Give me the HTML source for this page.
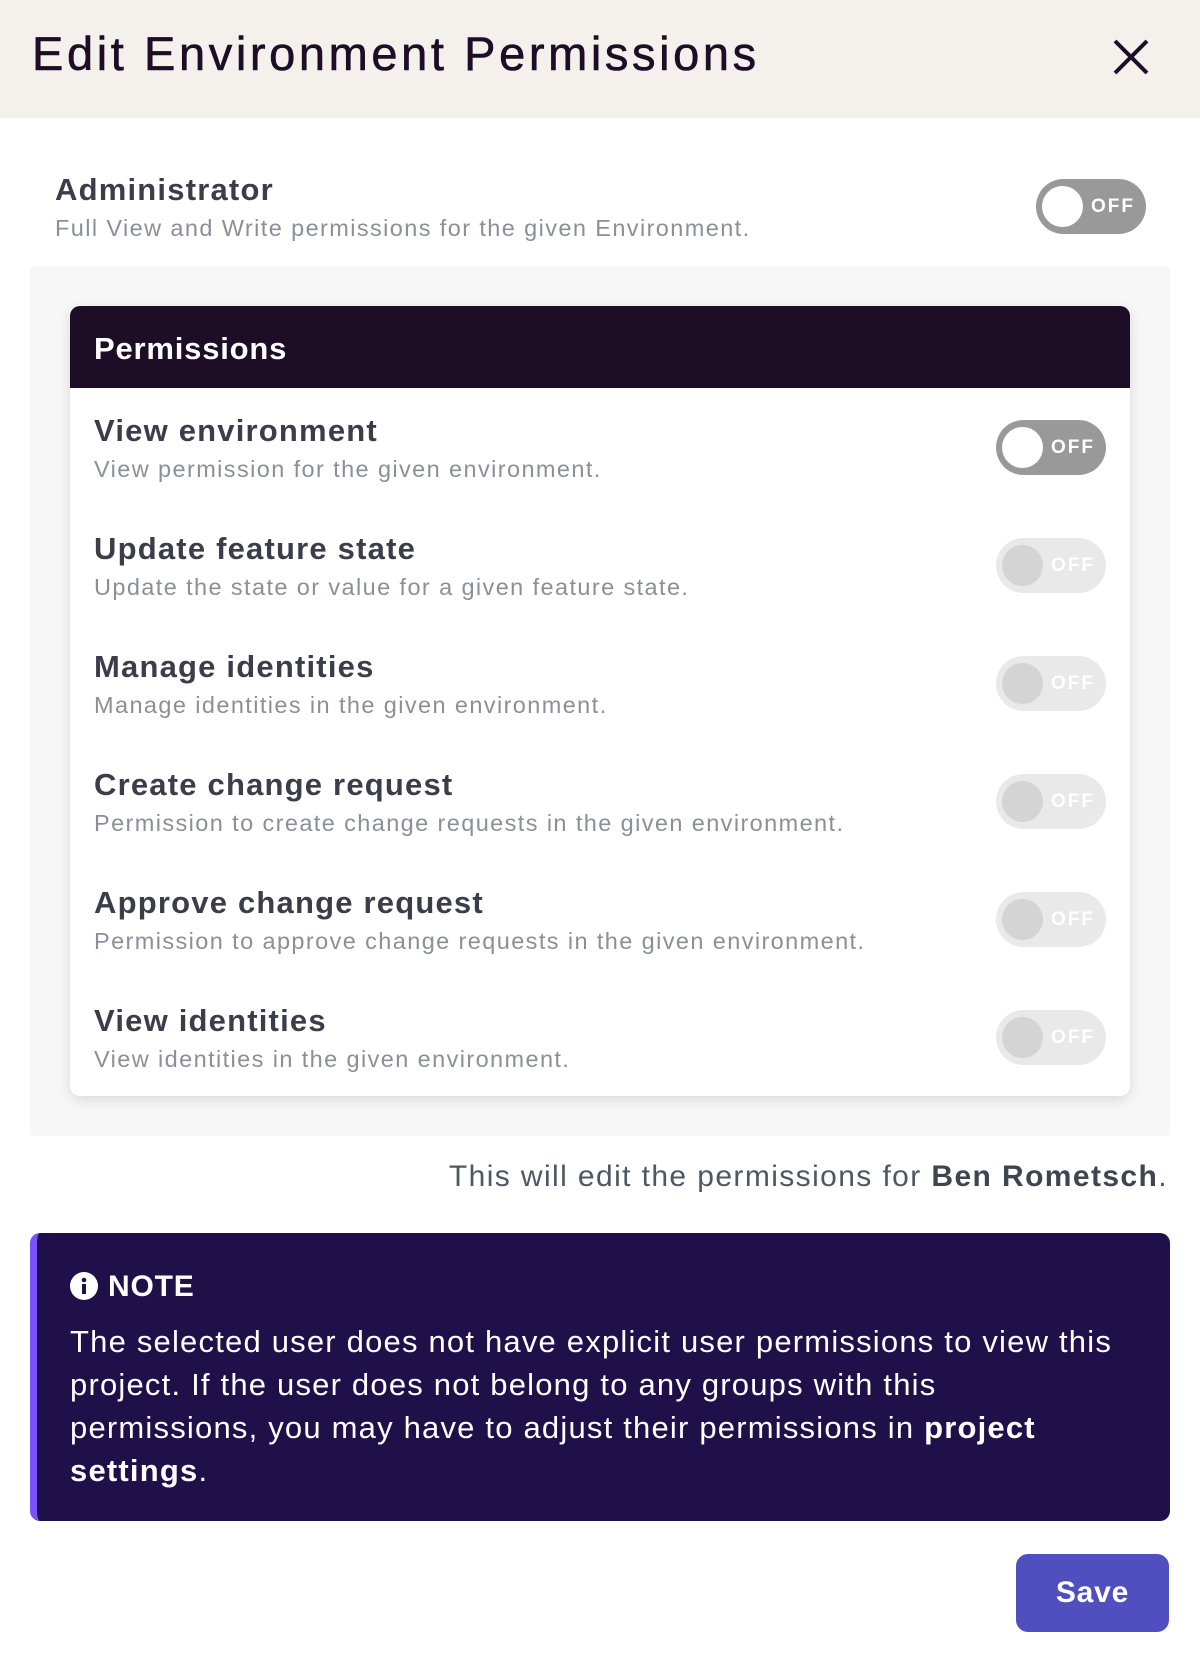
<!DOCTYPE html>
<html><head><meta charset="utf-8"><style>
*{margin:0;padding:0;box-sizing:border-box}
body{width:1200px;height:1664px;background:#fff;font-family:"Liberation Sans",sans-serif;position:relative;overflow:hidden}
.a{position:absolute;white-space:nowrap}
.hdr{left:0;top:0;width:1200px;height:118px;background:#f4f1ed}
.t{left:32px;top:26px;font-size:47px;color:#1e0d26;letter-spacing:3.6px;font-weight:500;-webkit-text-stroke:0.6px #1e0d26}
.rt{font-size:31px;font-weight:bold;color:#3d3c4a;letter-spacing:1.2px}
.rs{font-size:23.5px;color:#8a9097;letter-spacing:1.4px}
.tg{width:110px;height:55px;border-radius:28px;background:#999}
.tg i{position:absolute;left:6px;top:7px;width:41px;height:41px;border-radius:50%;background:#fff}
.tg b{position:absolute;left:55px;top:17px;font-size:19px;color:#fff;letter-spacing:2px}
.tg.d{background:#e9e9e9}.tg.d i{background:#d4d4d4}
</style></head><body>
<div class="a hdr"></div>
<div class="a t">Edit Environment Permissions</div>
<svg class="a" style="left:1113px;top:39px" width="36" height="36" viewBox="0 0 36 36"><path d="M2 2L34 34M34 2L2 34" stroke="#1e0d26" stroke-width="4"/></svg>

<div class="a rt" style="left:55px;top:172px">Administrator</div>
<div class="a rs" style="left:55px;top:215px">Full View and Write permissions for the given Environment.</div>
<div class="a tg" style="left:1036px;top:179px"><i></i><b>OFF</b></div>

<div class="a" style="left:30px;top:266px;width:1140px;height:870px;background:#f7f7f7;border-radius:4px"></div>
<div class="a" style="left:70px;top:306px;width:1060px;height:790px;background:#fff;border-radius:10px;box-shadow:0 4px 14px rgba(0,0,0,.12);overflow:hidden">
<div style="height:82px;background:#1e0d26"></div>
</div>
<div class="a" style="left:94px;top:331px;font-size:31px;font-weight:bold;color:#fff;letter-spacing:0.8px">Permissions</div>

<div class="a rt" style="left:94px;top:413px">View environment</div>
<div class="a rs" style="left:94px;top:456px">View permission for the given environment.</div>
<div class="a tg" style="left:996px;top:420px"><i></i><b>OFF</b></div>

<div class="a rt" style="left:94px;top:531px">Update feature state</div>
<div class="a rs" style="left:94px;top:574px">Update the state or value for a given feature state.</div>
<div class="a tg d" style="left:996px;top:538px"><i></i><b>OFF</b></div>

<div class="a rt" style="left:94px;top:649px">Manage identities</div>
<div class="a rs" style="left:94px;top:692px">Manage identities in the given environment.</div>
<div class="a tg d" style="left:996px;top:656px"><i></i><b>OFF</b></div>

<div class="a rt" style="left:94px;top:767px">Create change request</div>
<div class="a rs" style="left:94px;top:810px">Permission to create change requests in the given environment.</div>
<div class="a tg d" style="left:996px;top:774px"><i></i><b>OFF</b></div>

<div class="a rt" style="left:94px;top:885px">Approve change request</div>
<div class="a rs" style="left:94px;top:928px">Permission to approve change requests in the given environment.</div>
<div class="a tg d" style="left:996px;top:892px"><i></i><b>OFF</b></div>

<div class="a rt" style="left:94px;top:1003px">View identities</div>
<div class="a rs" style="left:94px;top:1046px">View identities in the given environment.</div>
<div class="a tg d" style="left:996px;top:1010px"><i></i><b>OFF</b></div>

<div class="a" style="right:32px;top:1160px;font-size:30px;color:#4c5862;letter-spacing:1.4px">This will edit the permissions for <b style="color:#3d4650">Ben Rometsch</b>.</div>

<div class="a" style="left:30px;top:1233px;width:1140px;height:288px;background:#1f1049;border-radius:10px;border-left:7px solid #7b51fb"></div>
<svg class="a" style="left:70px;top:1272px" width="28" height="28" viewBox="0 0 28 28"><circle cx="14" cy="14" r="14" fill="#fff"/><rect x="12" y="12" width="4" height="10" fill="#1f1049"/><circle cx="14" cy="8" r="2.3" fill="#1f1049"/></svg>
<div class="a" style="left:108px;top:1270px;font-size:30px;font-weight:bold;color:#fff;letter-spacing:0.8px">NOTE</div>
<div class="a" style="left:70px;top:1320px;font-size:31px;line-height:43px;color:#fff;letter-spacing:1.2px">The selected user does not have explicit user permissions to view this<br>project. If the user does not belong to any groups with this<br>permissions, you may have to adjust their permissions in <b>project</b><br><b>settings</b>.</div>

<div class="a" style="left:1016px;top:1554px;width:153px;height:78px;background:#4f4fc0;border-radius:12px;color:#fff;font-size:30px;font-weight:bold;text-align:center;line-height:78px;letter-spacing:0.8px">Save</div>
</body></html>
